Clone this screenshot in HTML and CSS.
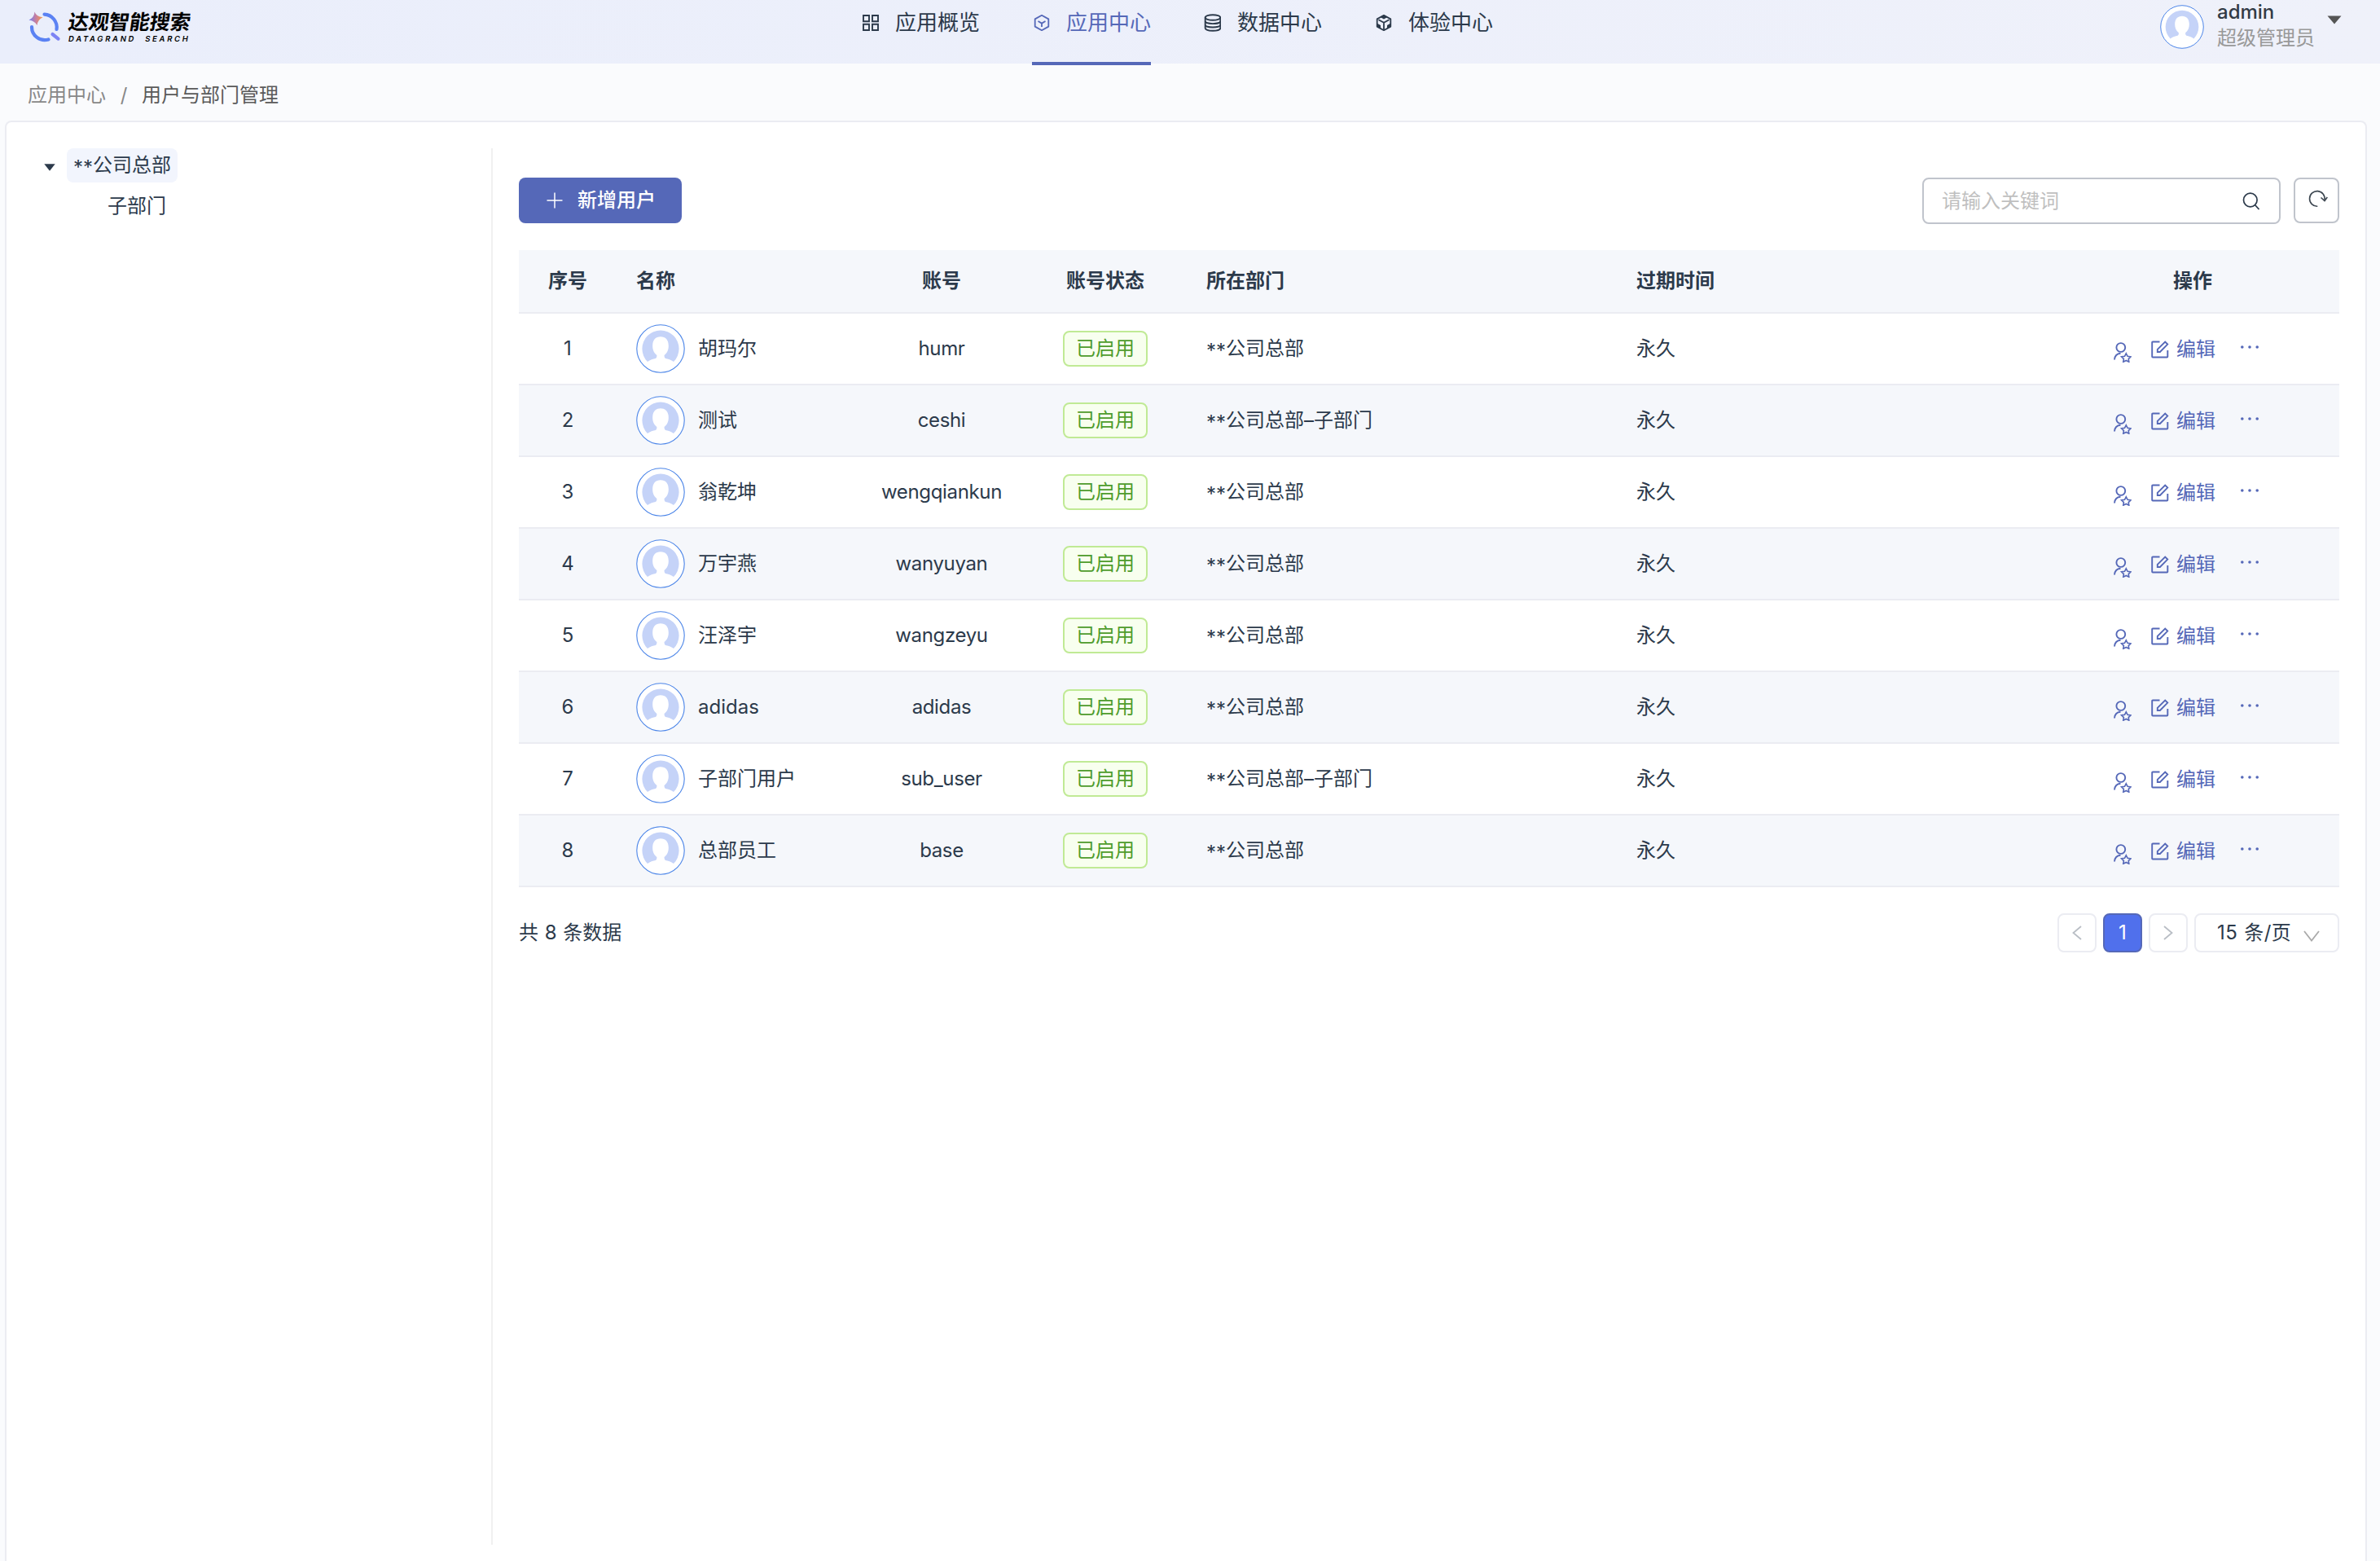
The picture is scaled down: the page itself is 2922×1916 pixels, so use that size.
FILE: index.html
```html
<!DOCTYPE html>
<html lang="zh-CN">
<head>
  <meta charset="UTF-8">
  <meta name="viewport" content="width=device-width, initial-scale=1.0">
  <title>用户与部门管理</title>
  <link rel="stylesheet" href="styles.css">
</head>
<body>
  <!-- shared icons -->
  <svg class="sprite">
    <symbol id="avatar" viewBox="0 0 60 60">
      <circle cx="30" cy="30" r="29.2" fill="#fff" stroke="#4a84e8" stroke-width="1.100"/>
      <path d="M14 46A22.6 22.6 0 1 1 46 46C43 43.400 39 42.800 36 42Q34.300 41 34.600 38C38.500 35 39.800 31 39.800 26.500C39.800 19 36 15.200 30 15.200S20.200 19 20.200 26.500C20.200 31 21.500 35 25.400 38Q25.700 41 24 42C21 42.800 17 43.400 14 46Z" fill="#c5d3f8"/>
    </symbol>
    <symbol id="user-star" viewBox="0 0 22 25">
      <g fill="none" stroke="currentColor" stroke-width="1.900">
        <circle cx="8.800" cy="6.500" r="5.400"/>
        <path d="M1 21.500C1.300 17 4.200 14 8.500 13.700"/>
        <path d="M15.300 13.800l1.800 3.500 3.900.6-2.800 2.700.6 3.600-3.500-1.700-3.500 1.700.6-3.600-2.800-2.700 3.900-.6z" stroke-width="1.600"/>
      </g>
    </symbol>
    <symbol id="edit" viewBox="0 0 22 22">
      <g fill="none" stroke="currentColor" stroke-width="1.900">
        <path d="M10.500 1.500H2a.8.800 0 0 0-.8.800V19.700c0 .5.300.8.800.8H19.500c.5 0 .8-.3.800-.8V12"/>
        <path d="M7.800 14V10.800L17.200 1.600l3 3L10.900 14z"/>
      </g>
    </symbol>
  </svg>

  <header class="header">
    <div class="logo">
      <svg class="logo-icon" width="40" height="38" viewBox="0 0 40 38">
        <defs>
          <linearGradient id="star" x1="0" y1="0" x2="1" y2="0">
            <stop offset="0" stop-color="#6f7cf5"/>
            <stop offset=".5" stop-color="#c77f9f"/>
            <stop offset="1" stop-color="#f79a45"/>
          </linearGradient>
        </defs>
        <g fill="none" stroke="#5b82f3" stroke-width="4.200" stroke-linecap="round">
          <path d="M19.500 3.600A16 16 0 0 1 34.500 22"/>
          <path d="M4 19A16 16 0 0 0 24.500 34.500"/>
          <path d="M29.500 28L36.500 33.600" stroke="#7d83f4"/>
        </g>
        <path d="M7.500 0.500Q9.500 6.500 17.500 7.200Q11 10.500 10.500 17Q7.500 11.500 0.500 10.500Q7 7.500 7.500 .5Z" fill="url(#star)"/>
      </svg>
      <div class="logo-text">
        <div class="logo-cn">达观智能搜索</div>
        <div class="logo-en">DATAGRAND SEARCH</div>
      </div>
    </div>

    <nav class="nav">
      <a class="nav-item">
        <svg width="22" height="22" viewBox="0 0 22 22" fill="none" stroke="currentColor" stroke-width="1.900">
          <path d="M3 2h7v7.200H3zM14 2h7v7.200h-7zM3 12.800h7v7.200H3zM14 12.800h7v7.200h-7z"/>
        </svg>
        <span>应用概览</span>
      </a>
      <a class="nav-item active">
        <svg width="22" height="22" viewBox="0 0 22 22" fill="none" stroke="currentColor" stroke-width="1.800">
          <path d="M12 1.800l8.300 4.600v9.200l-8.300 4.600-8.300-4.600V6.400z" stroke-linejoin="round"/>
          <path d="M7.500 9l4.500 2.600L16.500 9M12 11.500v4.500"/>
        </svg>
        <span>应用中心</span>
      </a>
      <a class="nav-item">
        <svg width="22" height="22" viewBox="0 0 22 22" fill="none" stroke="currentColor" stroke-width="1.900">
          <ellipse cx="12" cy="4.500" rx="9.300" ry="3.300"/>
          <path d="M2.700 4.500v13c0 1.800 4 3.200 9.300 3.200s9.300-1.400 9.300-3.200v-13"/>
          <path d="M2.700 9c0 1.800 4 3.100 9.300 3.100s9.300-1.300 9.300-3.100M2.700 13.400c0 1.800 4 3.100 9.300 3.100s9.300-1.300 9.300-3.100"/>
        </svg>
        <span>数据中心</span>
      </a>
      <a class="nav-item">
        <svg width="22" height="22" viewBox="0 0 22 22" fill="none" stroke="currentColor" stroke-width="1.800">
          <path d="M12 1.800l8.300 4.600v9.200l-8.300 4.600-8.300-4.600V6.400z" stroke-linejoin="round"/>
          <path d="M5.500 7.200l6.500 3.600 6.500-3.600M12 10.500v9"/>
          <path d="M12 1.200L16.500 4 12 6.500 7.500 4zM3.500 11.500l4.500 2.500v4.500l-4.500-2.500zM20.500 11.500L16 14v4.500l4.500-2.500z" fill="currentColor" stroke="none"/>
        </svg>
        <span>体验中心</span>
      </a>
    </nav>

    <div class="user">
      <svg class="user-avatar"><use href="#avatar"/></svg>
      <div class="user-info">
        <div class="user-name">admin</div>
        <div class="user-role">超级管理员</div>
      </div>
      <svg class="user-caret" width="18" height="11" viewBox="0 0 18 11"><path d="M.5.500h17L9 10.500z" fill="#555"/></svg>
    </div>
  </header>

  <div class="breadcrumb">
    <span>应用中心</span>
    <span class="sep">/</span>
    <span class="current">用户与部门管理</span>
  </div>

  <main class="card">
    <aside class="tree">
      <div class="tree-node">
        <svg width="14" height="9" viewBox="0 0 14 9"><path d="M.3.300h13.400L7 8.800z" fill="#2c3a4b"/></svg>
        <span class="tree-title selected"><span class="mask">**</span>公司总部</span>
      </div>
      <div class="tree-child">子部门</div>
    </aside>

    <section class="content">
      <div class="toolbar">
        <button class="btn-add">
          <svg width="20" height="20" viewBox="0 0 20 20" stroke="#fff" stroke-width="1.500"><path d="M10 .5v19M.5 10h19"/></svg>
          <span>新增用户</span>
        </button>
        <div class="search">
          <input class="search-input" type="text" placeholder="请输入关键词">
          <svg width="22" height="22" viewBox="0 0 22 22" fill="none" stroke="#2c3a4b" stroke-width="1.700"><circle cx="9.800" cy="9.500" r="8.300"/><path d="M15.500 15.500l5 5.500"/></svg>
        </div>
        <button class="btn-refresh">
          <svg width="24" height="22" viewBox="0 0 24 22" fill="none" stroke="#3c4650" stroke-width="1.600"><path d="M11.300 20.200A9.300 9.300 0 1 1 20 12.500"/><path d="M15.500 9.500l4.500 4 3.300-4.500"/></svg>
        </button>
      </div>

      <table class="table">
        <thead>
          <tr>
            <th class="col-index">序号</th>
            <th class="col-name">名称</th>
            <th class="col-account">账号</th>
            <th class="col-status">账号状态</th>
            <th class="col-dept">所在部门</th>
            <th class="col-expire">过期时间</th>
            <th class="col-action">操作</th>
          </tr>
        </thead>
        <tbody id="users"></tbody>
      </table>

      <div class="footer">
        <div class="total">共 8 条数据</div>
        <div class="pagination">
          <button class="page-btn"><svg width="12" height="18" viewBox="0 0 12 18"><path d="M11 1L1.500 9l9.500 8"/></svg></button>
          <button class="page-btn current">1</button>
          <button class="page-btn"><svg width="12" height="18" viewBox="0 0 12 18"><path d="M1 1l9.500 8L1 17"/></svg></button>
          <div class="page-size">
            <span>15 条/页</span>
            <svg width="20" height="14" viewBox="0 0 20 14"><path d="M1 1l9 11.500L19 1"/></svg>
          </div>
        </div>
      </div>
    </section>
  </main>

  <script>
    const users = [
      ['胡玛尔', 'humr', '公司总部'],
      ['测试', 'ceshi', '公司总部–子部门'],
      ['翁乾坤', 'wengqiankun', '公司总部'],
      ['万宇燕', 'wanyuyan', '公司总部'],
      ['汪泽宇', 'wangzeyu', '公司总部'],
      ['adidas', 'adidas', '公司总部'],
      ['子部门用户', 'sub_user', '公司总部–子部门'],
      ['总部员工', 'base', '公司总部']
    ];

    document.getElementById('users').innerHTML = users.map(([name, account, dept], i) => `
      <tr>
        <td class="col-index">${i + 1}</td>
        <td class="col-name"><div class="name"><svg class="avatar"><use href="#avatar"/></svg><span>${name}</span></div></td>
        <td class="col-account">${account}</td>
        <td class="col-status"><span class="tag">已启用</span></td>
        <td class="col-dept"><span class="mask">**</span>${dept}</td>
        <td class="col-expire">永久</td>
        <td class="col-action">
          <div class="actions">
            <svg class="icon-role"><use href="#user-star"/></svg>
            <svg class="icon-edit"><use href="#edit"/></svg>
            <span>编辑</span>
            <svg class="icon-more" viewBox="0 0 22 4"><g fill="currentColor"><circle cx="1.800" cy="2" r="1.800"/><circle cx="11" cy="2" r="1.800"/><circle cx="20.200" cy="2" r="1.800"/></g></svg>
          </div>
        </td>
      </tr>`).join('');
  </script>
</body>
</html>
```

FILE: styles.css
```css
:root {
  --primary: #5568b8;
  --text: #2c3a4b;
  --border: #ebecf2;
  --stripe: #f5f7fb;
}

* {
  box-sizing: border-box;
}

body {
  margin: 0;
  height: 1916px;
  overflow: hidden;
  display: flex;
  flex-direction: column;
  background: #fafbfd;
  color: var(--text);
  font-family: Inter, "Noto Sans CJK SC", sans-serif;
  font-size: 24px;
  line-height: 36px;
}

svg {
  display: block;
  flex: none;
}

button {
  padding: 0;
  font: inherit;
}

.sprite {
  width: 0;
  height: 0;
  position: absolute;
}

.mask {
  line-height: 1;
  vertical-align: -3px;
}

/* header */
.header {
  display: grid;
  grid-template-columns: 1057px 1fr auto;
  flex: none;
  height: 78px;
  background: linear-gradient(90deg, #eaeefb, #eff1fa);
}

.logo {
  display: flex;
  padding: 14px 0 0 35px;
}

.logo-text {
  margin-left: 9px;
  color: #000;
}

/* the wordmark leans less than a browser oblique */
.logo-cn {
  font-size: 25px;
  font-weight: 700;
  line-height: 26px;
  transform: skewX(-8deg);
}

.logo-en {
  margin-top: 2px;
  font-size: 9.500px;
  font-weight: 600;
  line-height: 12px;
  letter-spacing: 2.700px;
  word-spacing: 6px;
  white-space: nowrap;
  transform: skewX(-10deg);
}

.nav {
  display: flex;
  gap: 64px;
  height: 80px;
}

.nav-item {
  display: flex;
  gap: 20px;
  padding-top: 10px;
  font-size: 26px;
  border-bottom: 4px solid transparent;
}

.nav-item svg {
  margin-top: 7px;
}

.nav-item.active {
  color: var(--primary);
  border-color: var(--primary);
}

.user {
  display: flex;
  padding: 0 47px 0 0;
}

.user-avatar {
  width: 54px;
  height: 54px;
  margin-top: 6px;
}

.user-info {
  margin-left: 16px;
  line-height: 34px;
}

.user-name {
  color: #323a45;
  font-weight: 500;
  line-height: 30px;
}

.user-role {
  color: #999;
}

.user-caret {
  margin: 19px 0 0 15px;
}

.breadcrumb {
  display: flex;
  flex: none;
  height: 70px;
  padding: 21px 34px 0;
  color: #888;
}

.breadcrumb .sep {
  width: 44px;
  text-align: center;
}

.breadcrumb .current {
  color: #5a5a5a;
}

/* main card */
.card {
  display: flex;
  flex: 1;
  margin: 0 16px 0 6px;
  padding: 32px 32px 20px 0;
  background: #fff;
  border: 2px solid var(--border);
  border-bottom: 0;
  border-radius: 8px 8px 0 0;
}

.tree {
  width: 597px;
  flex: none;
  padding-left: 46px;
  border-right: 2px solid #f0f0f0;
}

.tree-node {
  display: flex;
  align-items: center;
}

.tree-node svg {
  margin-top: 5px;
}

.tree-title {
  margin-left: 14px;
  padding: 3px 8px;
  border-radius: 8px;
}

.tree-title.selected {
  background: #f2f5fd;
}

.tree-child {
  padding: 11px 0 0 78px;
}

.content {
  flex: 1;
  padding: 36px 0 0 32px;
}

.toolbar {
  display: flex;
  margin-bottom: 32px;
}

.btn-add {
  display: flex;
  align-items: center;
  gap: 18px;
  width: 200px;
  height: 56px;
  padding-left: 34px;
  color: #fff;
  background: var(--primary);
  border: none;
  border-radius: 8px;
  font-weight: 500;
}

.search {
  display: flex;
  align-items: center;
  width: 440px;
  height: 57px;
  margin-left: auto;
  padding: 0 23px 0 22px;
  border: 2px solid #c0c4cc;
  border-radius: 8px;
}

.search-input {
  flex: 1;
  min-width: 0;
  padding: 0;
  border: none;
  outline: none;
  font: inherit;
}

.search-input::placeholder {
  color: #bfbfbf;
}

.btn-refresh {
  width: 56px;
  height: 56px;
  margin-left: 16px;
  padding: 0 0 5px 16px;
  background: #fff;
  border: 2px solid #c0c4cc;
  border-radius: 8px;
}

/* user table */
.table {
  width: 100%;
  table-layout: fixed;
  border-collapse: separate;
  border-spacing: 0;
}

.table th,
.table td {
  padding: 0 24px;
  text-align: left;
  border-bottom: 2px solid var(--border);
}

.table th {
  height: 78px;
  background: var(--stripe);
  font-weight: 600;
}

.table td {
  height: 88px;
}

.table tbody tr:nth-child(even) {
  background: var(--stripe);
}

.table .col-index {
  width: 120px;
  text-align: center;
}

.table .col-name {
  width: 298px;
}

.table .col-account {
  width: 202px;
  text-align: center;
}

.table td.col-account {
  letter-spacing: -.35px;
}

.table .col-status {
  width: 200px;
  text-align: center;
}

.table .col-dept {
  width: 528px;
}

.table .col-action {
  width: 360px;
  text-align: center;
}

.name {
  display: flex;
  align-items: center;
  gap: 16px;
}

.avatar {
  width: 60px;
  height: 60px;
}

.tag {
  display: block;
  width: 104px;
  height: 44px;
  margin: 0 auto;
  line-height: 40px;
  color: #4f9c2d;
  background: #f8ffef;
  border: 2px solid #c0ea95;
  border-radius: 8px;
}

.actions {
  display: flex;
  align-items: center;
  padding: 1px 0 0 59px;
  color: var(--primary);
}

.icon-role {
  width: 22px;
  height: 25px;
  margin-top: 8px;
}

.icon-edit {
  width: 22px;
  height: 22px;
  margin: 0 9px 0 24px;
}

.icon-more {
  width: 22px;
  height: 4px;
  margin: -5px 0 0 31px;
}

.footer {
  display: flex;
  justify-content: space-between;
  align-items: center;
  margin-top: 32px;
  word-spacing: 1px;
}

.pagination {
  display: flex;
  gap: 8px;
}

.pagination svg {
  fill: none;
  stroke: #b9bec5;
  stroke-width: 1.800;
}

.page-btn {
  display: flex;
  align-items: center;
  justify-content: center;
  width: 48px;
  height: 48px;
  background: #fff;
  border: 2px solid var(--border);
  border-radius: 8px;
}

.page-btn.current {
  color: #fff;
  background: #5070ec;
  border-color: var(--primary);
}

.page-size {
  display: flex;
  align-items: center;
  justify-content: space-between;
  width: 178px;
  height: 48px;
  padding: 0 22px 0 26px;
  border: 2px solid var(--border);
  border-radius: 8px;
  letter-spacing: .4px;
}

.page-size svg {
  margin-top: 7px;
  stroke: #aaa;
}
```
